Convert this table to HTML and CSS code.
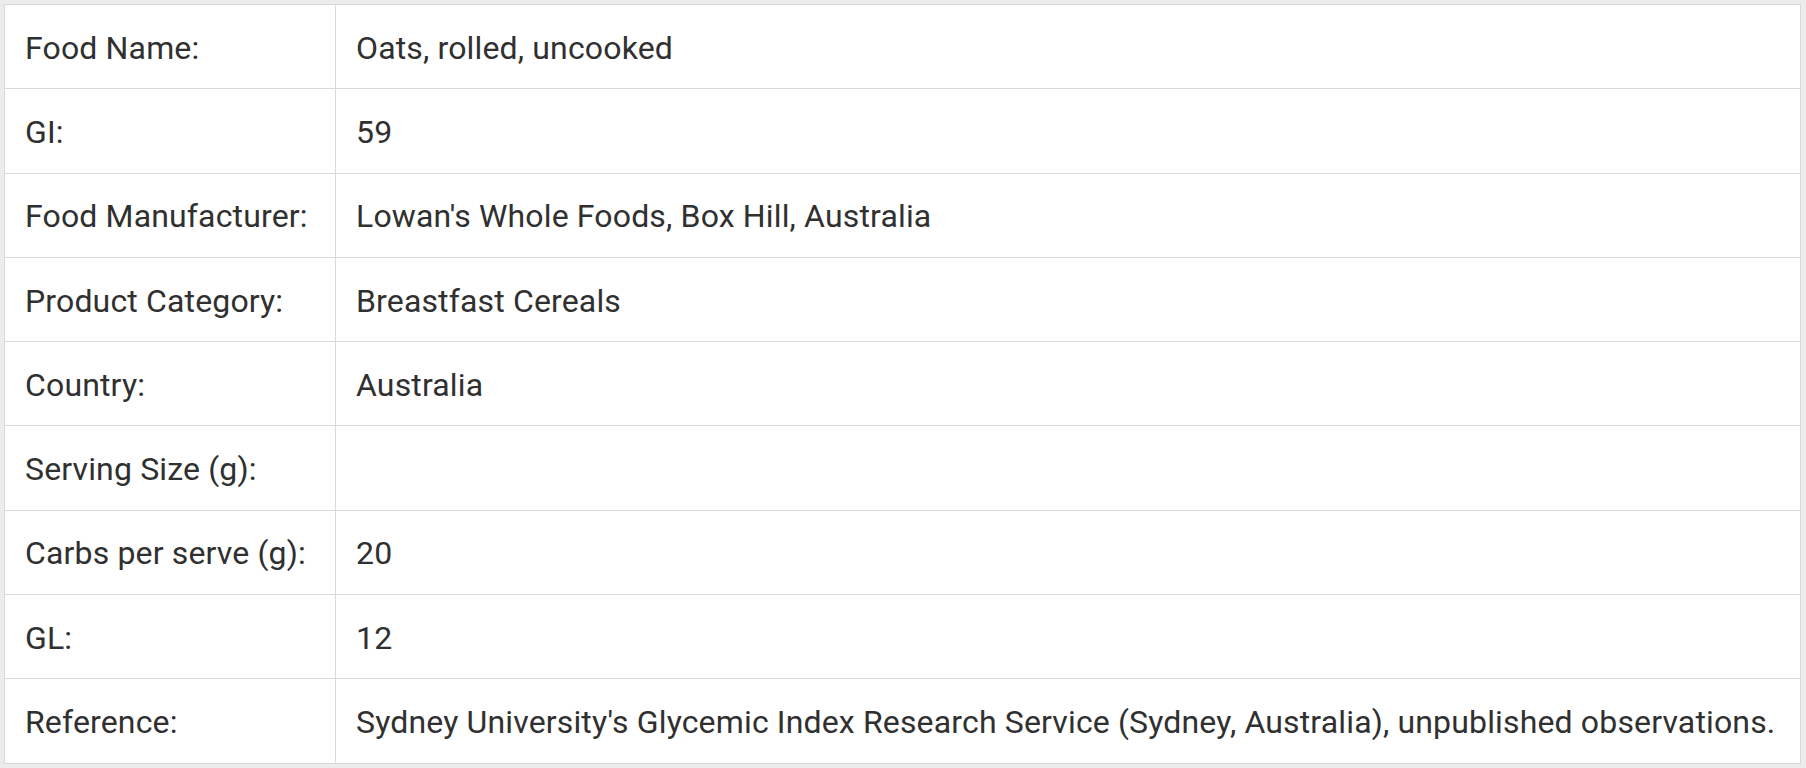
FILE: index.html
```html
<!DOCTYPE html>
<html lang="en">
<head>
<meta charset="utf-8">
<title>Oats, rolled, uncooked</title>
<link rel="stylesheet" href="styles.css">
</head>
<body>
<div class="page">
  <div class="food-table">
    <div class="cell label">Food Name:</div><div class="cell value">Oats, rolled, uncooked</div>
    <div class="cell label">GI:</div><div class="cell value">59</div>
    <div class="cell label">Food Manufacturer:</div><div class="cell value">Lowan's Whole Foods, Box Hill, Australia</div>
    <div class="cell label">Product Category:</div><div class="cell value">Breastfast Cereals</div>
    <div class="cell label">Country:</div><div class="cell value">Australia</div>
    <div class="cell label">Serving Size (g):</div><div class="cell value"></div>
    <div class="cell label">Carbs per serve (g):</div><div class="cell value">20</div>
    <div class="cell label">GL:</div><div class="cell value">12</div>
    <div class="cell label">Reference:</div><div class="cell value">Sydney University's Glycemic Index Research Service (Sydney, Australia), unpublished observations.</div>
  </div>
</div>
</body>
</html>
```
FILE: styles.css
```css
html, body {
  margin: 0;
  padding: 0;
  background: #ececec;
}
.page {
  padding: 4px 5px 0 4px;
  height: 768px;
  box-sizing: border-box;
}
.food-table {
  display: grid;
  grid-template-columns: 331px 1fr;
  grid-auto-rows: 84.3px;
  background: #ffffff;
  border: 1px solid #d9d9d9;
  border-bottom: none;
  font-family: Roboto, "Liberation Sans", sans-serif;
  font-size: 32px;
  letter-spacing: 0.15px;
  color: #303030;
}
.cell {
  box-sizing: border-box;
  display: flex;
  align-items: center;
  padding: 2px 20px 0 20px;
  border-bottom: 1px solid #d9d9d9;
  white-space: nowrap;
}
.label {
  border-right: 1px solid #d9d9d9;
}
```
